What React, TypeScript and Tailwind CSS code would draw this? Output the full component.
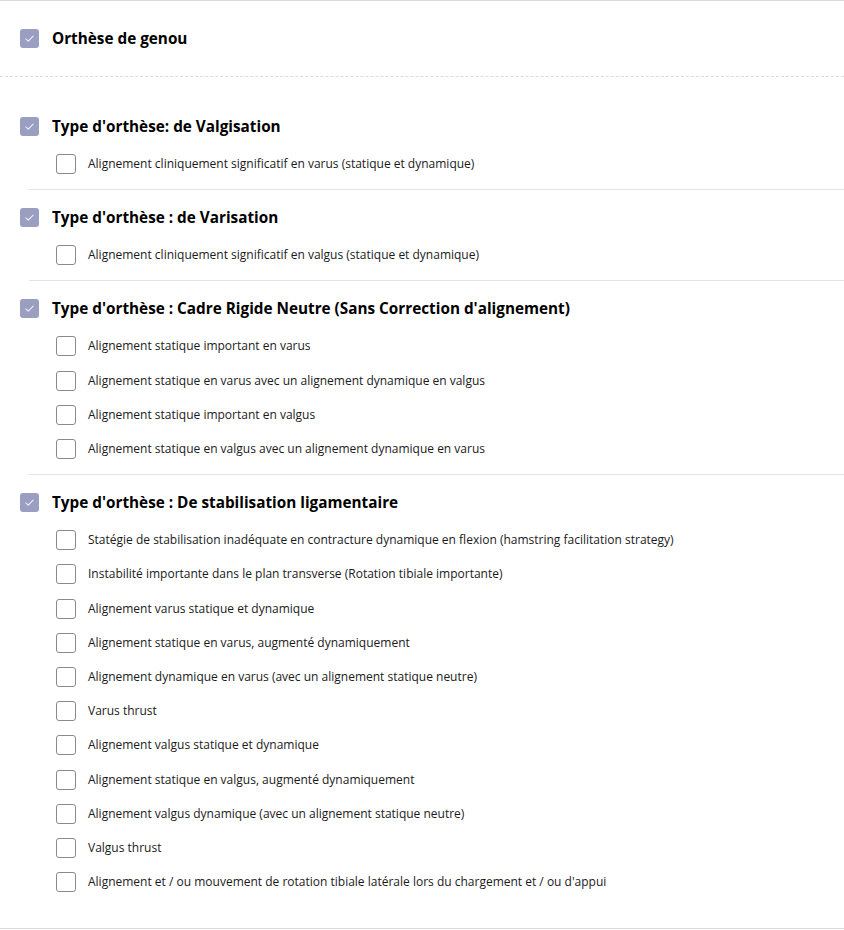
import React from 'react';

type Section = { title: string; items: string[] };

const sections: Section[] = [
  {
    title: "Type d'orthèse: de Valgisation",
    items: ['Alignement cliniquement significatif en varus (statique et dynamique)'],
  },
  {
    title: "Type d'orthèse : de Varisation",
    items: ['Alignement cliniquement significatif en valgus (statique et dynamique)'],
  },
  {
    title: "Type d'orthèse : Cadre Rigide Neutre (Sans Correction d'alignement)",
    items: [
      'Alignement statique important en varus',
      'Alignement statique en varus avec un alignement dynamique en valgus',
      'Alignement statique important en valgus',
      'Alignement statique en valgus avec un alignement dynamique en varus',
    ],
  },
  {
    title: "Type d'orthèse : De stabilisation ligamentaire",
    items: [
      'Statégie de stabilisation inadéquate en contracture dynamique en flexion (hamstring facilitation strategy)',
      'Instabilité importante dans le plan transverse (Rotation tibiale importante)',
      'Alignement varus statique et dynamique',
      'Alignement statique en varus, augmenté dynamiquement',
      'Alignement dynamique en varus (avec un alignement statique neutre)',
      'Varus thrust',
      'Alignement valgus statique et dynamique',
      'Alignement statique en valgus, augmenté dynamiquement',
      'Alignement valgus dynamique (avec un alignement statique neutre)',
      'Valgus thrust',
      "Alignement et / ou mouvement de rotation tibiale latérale lors du chargement et / ou d'appui",
    ],
  },
];

const CheckedBox = () => (
  <span className="flex h-[19px] w-[19px] shrink-0 items-center justify-center rounded-[3px] bg-[#9a9ec1]">
    <svg width="11" height="11" viewBox="0 0 12 12" fill="none">
      <path d="M2 6.3l2.6 2.6L10 3.4" stroke="#eef0f7" strokeWidth="1.2" strokeLinecap="round" strokeLinejoin="round" />
    </svg>
  </span>
);

const EmptyBox = () => (
  <span className="block h-[20px] w-[20px] shrink-0 rounded-[3px] border border-[#8a8a8a] bg-white" />
);

export default function App() {
  return (
    <div className="bg-white font-['Segoe_UI','Open_Sans',sans-serif] text-black">
      <div className="border-t border-b border-[#d9d9d9] pb-[21px]">
        <div className="flex h-[76px] items-center gap-[13px] border-b border-dashed border-[#dcdcdc] pl-[20px]">
          <CheckedBox />
          <span className="text-[15.3px] font-bold">Orthèse de genou</span>
        </div>

        {sections.map((s, i) => (
          <div key={s.title}>
            {i > 0 && <div className="ml-[29px] border-t border-[#e3e3e3]" />}
            <div className={i === 0 ? 'pt-[38px] pb-[8px]' : 'pt-[16px] pb-[8px]'}>
              <div className="flex h-[22px] items-center gap-[13px] pl-[20px]">
                <CheckedBox />
                <span className="text-[15.3px] font-bold">{s.title}</span>
              </div>
              <div className="mt-[10px]">
                {s.items.map((it) => (
                  <div key={it} className="flex h-[34.2px] items-center gap-[12px] pl-[56px]">
                    <EmptyBox />
                    <span className="text-[12px] text-[#1a1a1a]">{it}</span>
                  </div>
                ))}
              </div>
            </div>
          </div>
        ))}
      </div>
    </div>
  );
}
